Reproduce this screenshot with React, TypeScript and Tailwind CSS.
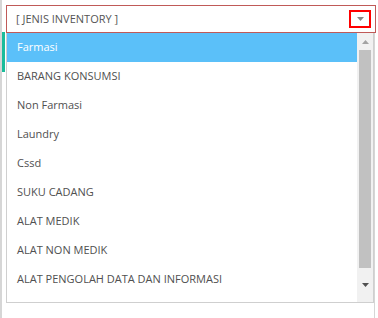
const items = [
  'Farmasi',
  'BARANG KONSUMSI',
  'Non Farmasi',
  'Laundry',
  'Cssd',
  'SUKU CADANG',
  'ALAT MEDIK',
  'ALAT NON MEDIK',
  'ALAT PENGOLAH DATA DAN INFORMASI',
];

export default function App() {
  return (
    <div
      className="w-[378px] h-[318px] bg-white flex overflow-hidden"
      style={{ fontFamily: '"Open Sans", "Liberation Sans", sans-serif' }}
    >
      {/* page behind the dropdown */}
      <div className="w-[2px] h-full bg-[#d6d6d6] shrink-0" />
      <div className="w-[4px] shrink-0 flex flex-col">
        <div className="h-[32px]" />
        <div className="h-[40px] w-[3px] bg-[#1bbc9b]" />
      </div>

      <div className="flex flex-col pt-[5px] h-full">
        {/* select */}
        <div className="shrink-0 w-[370px] h-[28px] border border-[#c05a58] bg-white flex items-center pl-[9px] pr-[4px]">
          <span className="flex-1 text-[11px] text-[#555]">[ JENIS INVENTORY ]</span>
          <div className="w-[22px] h-[18px] border-2 border-[#ff0000] flex items-center justify-center">
            <svg width="7" height="4" viewBox="0 0 7 4">
              <path d="M0 0h7L3.5 4z" fill="#888" />
            </svg>
          </div>
        </div>

        {/* options list */}
        <div className="flex flex-1">
          <div className="w-[368px] h-[270px] border border-t-0 border-[#cfcfcf] flex">
            <div className="flex-1 flex flex-col">
              {items.map((item, i) => (
                <div
                  key={item}
                  className={
                    i === 0
                      ? 'h-[29px] flex items-center pl-[10px] text-[11px] bg-[#5bc0f9] text-white'
                      : 'h-[29px] flex items-center pl-[10px] text-[11px] text-[#505050]'
                  }
                >
                  {item}
                </div>
              ))}
            </div>
            {/* scrollbar */}
            <div className="w-[16px] bg-[#f1f1f1] flex flex-col">
              <div className="h-[17px] flex items-center justify-center">
                <svg width="7" height="4" viewBox="0 0 7 4">
                  <path d="M3.5 0L7 4H0z" fill="#a3a3a3" />
                </svg>
              </div>
              <div className="h-[218px] mx-[2px] bg-[#c1c1c1]" />
              <div className="flex-1 flex items-center justify-center">
                <svg width="7" height="4" viewBox="0 0 7 4">
                  <path d="M0 0h7L3.5 4z" fill="#505050" />
                </svg>
              </div>
            </div>
          </div>
          <div className="w-px self-stretch bg-[#d6d6d6]" />
        </div>
      </div>
    </div>
  );
}
